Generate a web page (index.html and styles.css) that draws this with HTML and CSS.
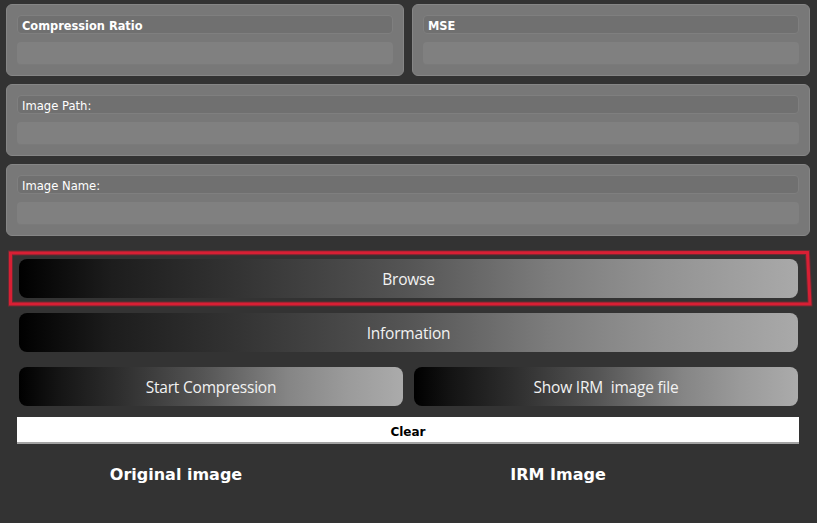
FILE: index.html
```html
<!DOCTYPE html>
<html lang="en">
<head>
<meta charset="utf-8">
<title>IRM Compression</title>
<link rel="stylesheet" href="styles.css">
</head>
<body>
<div class="app">
  <div class="panels">
    <div class="row-two">
      <section class="panel">
        <div class="label strong">Compression Ratio</div>
        <div class="field"></div>
      </section>
      <section class="panel">
        <div class="label strong">MSE</div>
        <div class="field"></div>
      </section>
    </div>
    <section class="panel">
      <div class="label">Image Path:</div>
      <div class="field"></div>
    </section>
    <section class="panel">
      <div class="label">Image Name:</div>
      <div class="field"></div>
    </section>
  </div>
  <div class="actions">
    <button class="btn">Browse</button>
    <button class="btn">Information</button>
    <div class="pair">
      <button class="btn">Start Compression</button>
      <button class="btn">Show IRM&nbsp; image file</button>
    </div>
  </div>
  <button class="clear">Clear</button>
  <div class="titles">
    <h2>Original image</h2>
    <h2>IRM Image</h2>
  </div>
  <svg class="annotation" width="817" height="523" viewBox="0 0 817 523">
    <polygon points="10.5,253 807.5,252.5 810,304 10.5,304" fill="none" stroke="#d21e32" stroke-width="5" stroke-opacity="0.35" stroke-linejoin="miter"/>
    <polygon points="10.5,253 807.5,252.5 810,304 10.5,304" fill="none" stroke="#d81f34" stroke-width="3" stroke-linejoin="miter"/>
  </svg>
</div>
</body>
</html>
```
FILE: styles.css
```css
html, body {
  margin: 0;
  padding: 0;
  background: #333333;
}
.app {
  position: relative;
  width: 817px;
  height: 523px;
  box-sizing: border-box;
  padding-top: 4px;
  font-family: "DejaVu Sans", Verdana, sans-serif;
  overflow: hidden;
}
.panels {
  display: flex;
  flex-direction: column;
  gap: 8px;
  padding: 0 7px 0 6px;
}
.row-two {
  display: grid;
  grid-template-columns: 1fr 1fr;
  gap: 8px;
}
.panel {
  height: 72px;
  box-sizing: border-box;
  background: #787878;
  border: 1px solid #868686;
  border-radius: 6px;
  padding: 10px 10px;
  display: flex;
  flex-direction: column;
  gap: 8px;
}
.label {
  height: 19px;
  box-sizing: border-box;
  background: #707070;
  border: 1px solid #7f7f7f;
  border-radius: 4px;
  color: #ffffff;
  font-size: 11.6px;
  line-height: 19px;
  padding: 1px 0 0 4px;
  white-space: nowrap;
}
.label.strong {
  font-weight: bold;
  font-size: 11.4px;
}
.field {
  height: 23px;
  background: #808080;
  border-radius: 4px;
  box-shadow: inset 0 -1px 0 #7a7a7a;
}
.actions {
  margin-top: 23px;
  padding: 0 19px;
  display: flex;
  flex-direction: column;
  gap: 15px;
}
.pair {
  display: grid;
  grid-template-columns: 1fr 1fr;
  gap: 11px;
}
.btn {
  height: 39px;
  margin: 0;
  border: none;
  border-radius: 8px;
  background: linear-gradient(to right, #000000 0%, #1d1d1d 12%, #333333 28%, #555555 50%, #7c7c7c 68%, #929292 82%, #a9a9a9 100%);
  color: #f2f2f2;
  font-family: "Open Sans", "Noto Sans", sans-serif;
  font-size: 15.5px;
  letter-spacing: -0.2px;
  padding: 1px 0 0;
  white-space: pre;
}
.pair .btn {
  background: linear-gradient(to right, #000000 0%, #141414 10%, #2e2e2e 26%, #555555 48%, #858585 70%, #9a9a9a 85%, #ababab 100%);
}
.clear {
  display: block;
  margin: 11px 0 0 17px;
  width: 782px;
  height: 27px;
  box-sizing: border-box;
  border: none;
  border-bottom: 2px solid #a3a3a3;
  background: #ffffff;
  color: #000000;
  font-family: "DejaVu Sans", Verdana, sans-serif;
  font-weight: bold;
  font-size: 12px;
  padding: 4px 0 0;
}
.titles {
  display: grid;
  grid-template-columns: 352px 412px;
  margin-top: 18px;
}
.titles h2 {
  margin: 0;
  text-align: center;
  color: #ffffff;
  font-family: "DejaVu Sans", Verdana, sans-serif;
  font-weight: bold;
  font-size: 16px;
  line-height: 26px;
}
.annotation {
  position: absolute;
  left: 0;
  top: 0;
  pointer-events: none;
}
```
